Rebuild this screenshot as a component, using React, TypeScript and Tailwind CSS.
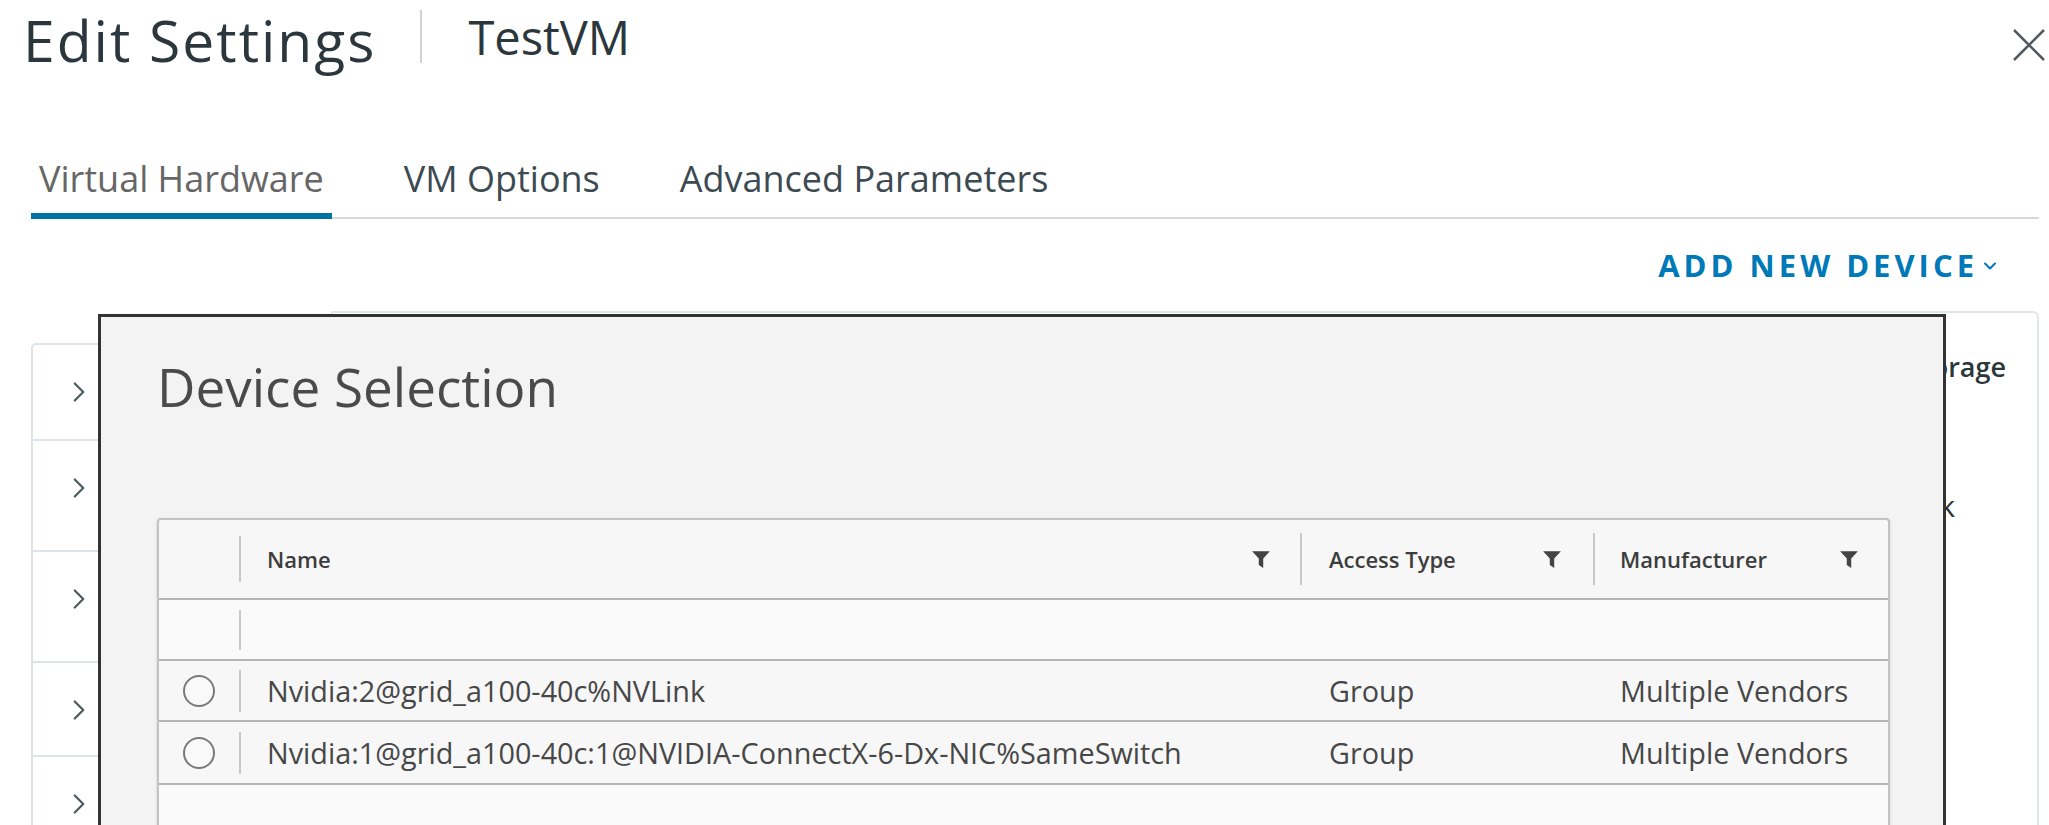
import { ChevronRight, ChevronDown } from 'lucide-react';

const ROWS = [
  { name: 'Nvidia:2@grid_a100-40c%NVLink', type: 'Group', vendor: 'Multiple Vendors' },
  { name: 'Nvidia:1@grid_a100-40c:1@NVIDIA-ConnectX-6-Dx-NIC%SameSwitch', type: 'Group', vendor: 'Multiple Vendors' },
];

const COLS = 'grid grid-cols-[80px_1061px_293px_293px]';

function Funnel() {
  return (
    <svg width="20" height="20" viewBox="0 0 18 18" className="shrink-0">
      <path d="M1 2h16l-6 6.5V17l-4-2.5V8.5z" fill="#444" />
    </svg>
  );
}

function Sep({ h = 'h-[46px]' }: { h?: string }) {
  return <div className={`w-[2px] ${h} bg-[#c8c8c8] shrink-0`} />;
}

export default function App() {
  return (
    <div className="relative w-[2049px] h-[825px] overflow-hidden bg-white font-['Open_Sans','Liberation_Sans',sans-serif]">
      {/* header */}
      <div className="flex items-start h-[84px] pl-[23px]">
        <h1 className="pt-[12px] text-[57px] leading-none font-normal tracking-[2px] text-[#2b373d]">Edit Settings</h1>
        <div className="ml-[44px] mt-[10px] w-[2px] h-[53px] bg-[#d2d2d2]" />
        <div className="ml-[46px] pt-[14px] text-[47px] leading-none text-[#2b373d]">TestVM</div>
        <button className="ml-auto mt-[29px] mr-[3px]">
          <svg width="34" height="32" viewBox="0 0 34 32">
            <path d="M2 1 L32 31 M32 1 L2 31" stroke="#4f5a60" strokeWidth="2.5" />
          </svg>
        </button>
      </div>

      {/* tabs */}
      <div className="ml-[31px] mr-[10px] pt-[77px] flex gap-[64px] border-b-2 border-[#d3dadd]">
        <div className="px-2 pb-[16px] -mb-[2px] border-b-[6px] border-[#0072a3] text-[36px] leading-none text-[#666]">Virtual Hardware</div>
        <div className="px-2 pb-[16px] text-[36px] leading-none text-[#3c4a52]">VM Options</div>
        <div className="px-2 pb-[16px] text-[36px] leading-none text-[#3c4a52]">Advanced Parameters</div>
      </div>

      {/* add device */}
      <div className="h-[92px] flex items-center justify-end pr-[49px]">
        <span className="text-[31px] font-bold tracking-[4px] text-[#0079b8]">ADD NEW DEVICE</span>
        <ChevronDown size={20} strokeWidth={2.5} className="text-[#0079b8] ml-[2px] mt-[2px]" />
      </div>

      {/* content behind dialog */}
      <div className="flex items-start mr-[10px]">
        <div className="ml-[31px] mt-[32px] w-[300px] border-2 border-[#dde3e6] rounded-tl-[5px] bg-white">
          {[94, 111, 111, 94, 120].map((h, i) => (
            <div key={i} style={{ height: h }} className={`pl-[29px] pt-[30px] ${i ? 'border-t-2 border-[#dde3e6]' : ''}`}>
              <ChevronRight size={34} strokeWidth={1.6} className="text-[#4f5a60]" />
            </div>
          ))}
        </div>
        <div className="flex-1 h-[520px] border-2 border-[#e1e6e8] rounded-tr-[6px] bg-white">
          <div className="h-[108px] flex items-center justify-end pr-[31px] text-[27px] font-semibold text-[#2b373d]">Storage</div>
          <div className="mt-[54px] h-[60px] flex items-center justify-end pr-[82px] text-[30px] text-[#2b373d]">Network</div>
        </div>
      </div>

      {/* device selection dialog */}
      <div className="absolute left-[98px] top-[314px] w-[1848px] h-[560px] border-[3px] border-[#333] bg-[#f3f3f3]">
        <div className="pl-[56px] pt-[43px] text-[53px] leading-none text-[#4a4a4a]">Device Selection</div>
        <div className="ml-[56px] mt-[105px] w-[1733px] border-2 border-[#c2c2c2] rounded-[4px] bg-[#f7f7f7] shadow-[0_1px_3px_rgba(0,0,0,0.15)] text-[#3d3d3d]">
          <div className={`${COLS} h-[78px] items-center`}>
            <div />
            <div className="flex items-center h-full">
              <Sep />
              <span className="ml-[26px] text-[22px] font-semibold">Name</span>
              <div className="ml-auto mr-[29px]"><Funnel /></div>
            </div>
            <div className="flex items-center h-full">
              <Sep h="h-[52px]" />
              <span className="ml-[27px] text-[22px] font-semibold">Access Type</span>
              <div className="ml-auto mr-[31px]"><Funnel /></div>
            </div>
            <div className="flex items-center h-full">
              <Sep h="h-[52px]" />
              <span className="ml-[25px] text-[22px] font-semibold">Manufacturer</span>
              <div className="ml-auto mr-[27px]"><Funnel /></div>
            </div>
          </div>
          <div className={`${COLS} h-[61px] items-center border-t-2 border-[#b5b5b5] bg-[#fafafa]`}>
            <div />
            <Sep h="h-[40px]" />
          </div>
          {ROWS.map((r, i) => (
            <div key={i} className={`${COLS} ${i ? 'h-[63px]' : 'h-[61px]'} items-center border-t-2 border-[#b5b5b5] text-[28.8px] text-[#474747]`}>
              <div className="flex justify-center">
                <div className="w-[32px] h-[32px] rounded-full border-2 border-[#7a7a7a] bg-[#f9f9f9]" />
              </div>
              <div className="flex items-center">
                <Sep h="h-[42px]" />
                <span className="ml-[26px] whitespace-nowrap">{r.name}</span>
              </div>
              <div className="pl-[29px]">{r.type}</div>
              <div className="pl-[27px]">{r.vendor}</div>
            </div>
          ))}
          <div className="h-[120px] border-t-2 border-[#b5b5b5] bg-[#fafafa]" />
        </div>
      </div>
    </div>
  );
}
